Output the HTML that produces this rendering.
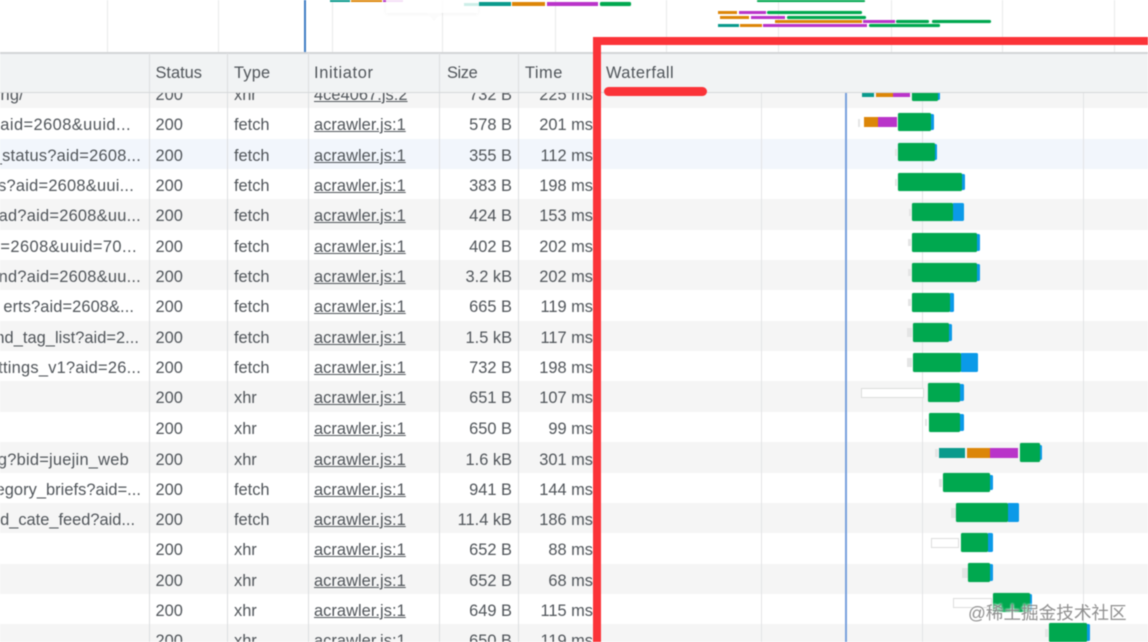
<!DOCTYPE html>
<html lang="en">
<head>
<meta charset="utf-8">
<title>Network Waterfall</title>
<style>
html,body{margin:0;padding:0;background:#fff}
#p{position:relative;width:1148px;height:642px;overflow:hidden;background:#fff;font-family:"Liberation Sans",Arial,sans-serif;font-size:16.4px;color:#50555a;filter:blur(.4px)}
#p div{position:absolute}
.b{left:0;width:1148px}
.g{background:#f5f5f5}
.r{left:0;width:593px;height:30px;line-height:30px;white-space:nowrap}
.n{left:0;top:0;height:30px;overflow:hidden;white-space:nowrap;letter-spacing:.25px}
.n div{right:0;top:0}
.s{left:155.5px}.y{left:234px}.i{left:314px;text-decoration:underline;letter-spacing:.05px}
.z{right:81px}.m{right:0}
.l{background:#dcdee0;width:1px}
.f{background:#e9eaeb;width:1px}
.G{background:#00a84f;border-radius:1.5px;box-shadow:0 0 1px rgba(0,168,79,.5)}.B{background:#0b9ae8;border-radius:0 1.5px 1.5px 0}.T{background:#0a9a8c}.O{background:#dc8608}.P{background:#b934c9}
.x{background:#e4e5e5}
.w{background:#fff;border:1px solid #dcdddc;box-sizing:border-box;height:10px}
.h{top:54px;line-height:39px}
</style>
</head>
<body>
<div id="p">
<!-- overview grid -->
<div class="f" style="left:107px;top:0;height:52px"></div>
<div class="f" style="left:218px;top:0;height:52px"></div>
<div class="f" style="left:332px;top:0;height:52px"></div>
<div class="f" style="left:442px;top:0;height:52px"></div>
<div class="f" style="left:555px;top:0;height:52px"></div>
<div class="f" style="left:666px;top:0;height:52px"></div>
<div class="f" style="left:778px;top:0;height:52px"></div>
<div class="f" style="left:891px;top:0;height:52px"></div>
<div class="f" style="left:1002px;top:0;height:52px"></div>
<div class="f" style="left:1114px;top:0;height:52px"></div>
<div style="left:304px;top:0;width:1.5px;height:52px;background:#3f7cc4"></div>
<!-- overview bars -->
<div class="T" style="left:330px;top:0;width:20px;height:2px"></div>
<div class="O" style="left:351px;top:0;width:31px;height:2px"></div>
<div class="P" style="left:383px;top:0;width:20px;height:2px"></div>
<div style="left:386px;top:0;width:92px;height:13px;background:rgba(255,255,255,.85);box-shadow:0 1px 4px rgba(0,0,0,.05)"></div>
<div style="left:427px;top:13px;width:0;height:0;border-left:7px solid transparent;border-right:7px solid transparent;border-top:8px solid #fbfbfb"></div>
<div style="left:464px;top:3px;width:15px;height:3px;background:#cdeee8"></div>
<div class="T" style="left:479px;top:2px;width:32px;height:3.5px"></div>
<div class="O" style="left:512px;top:2px;width:33px;height:3.5px"></div>
<div class="P" style="left:547px;top:2px;width:51px;height:3.5px"></div>
<div class="G" style="left:600px;top:2px;width:31px;height:3.5px"></div>
<div class="G" style="left:757px;top:0;width:108px;height:2px"></div>
<div class="O" style="left:718px;top:11px;width:19px;height:3px"></div>
<div class="P" style="left:739px;top:11px;width:27px;height:3px"></div>
<div class="G" style="left:767px;top:11px;width:95px;height:3px"></div>
<div class="O" style="left:720px;top:15.5px;width:29px;height:3px"></div>
<div class="P" style="left:751px;top:15.5px;width:34px;height:3px"></div>
<div class="G" style="left:787px;top:15.5px;width:79px;height:3px"></div>
<div class="O" style="left:775px;top:20px;width:87px;height:3px"></div>
<div class="P" style="left:863px;top:20px;width:32px;height:3px"></div>
<div class="G" style="left:896px;top:20px;width:33px;height:3px"></div>
<div class="G" style="left:932px;top:20px;width:59px;height:3px"></div>
<div class="T" style="left:718px;top:24px;width:21px;height:3px"></div>
<div class="O" style="left:740px;top:24px;width:22px;height:3px"></div>
<div class="P" style="left:763px;top:24px;width:104px;height:3px"></div>
<div class="G" style="left:869px;top:24px;width:71px;height:3px"></div>

<!-- row bands -->
<div class="b g" style="top:92px;height:16px"></div>
<div class="b" style="top:139px;height:30px;background:#f2f6fc"></div>
<div class="b g" style="top:199px;height:31px"></div>
<div class="b g" style="top:260px;height:30px"></div>
<div class="b g" style="top:321px;height:30px"></div>
<div class="b g" style="top:381px;height:31px"></div>
<div class="b g" style="top:442px;height:31px"></div>
<div class="b g" style="top:503px;height:30px"></div>
<div class="b g" style="top:564px;height:30px"></div>
<div class="b g" style="top:624px;height:18px"></div>

<!-- waterfall grid -->
<div class="f" style="left:760.5px;top:92px;height:550px;background:#e3e4e5"></div>
<div class="f" style="left:921.5px;top:92px;height:550px;background:#e3e4e5"></div>
<div class="f" style="left:1083px;top:92px;height:550px;background:#e3e4e5"></div>
<div style="left:844.5px;top:92px;width:2px;height:550px;background:#78a0dc"></div>

<!-- waterfall bars -->
<div class="T" style="left:862px;top:92px;width:12px;height:5px"></div><div class="O" style="left:876px;top:92px;width:17px;height:5px"></div><div class="P" style="left:893px;top:92px;width:17px;height:5px"></div><div class="G" style="left:912px;top:92px;width:26px;height:9px"></div><div class="B" style="left:938px;top:92px;width:2px;height:8px"></div>
<div class="x" style="left:858px;top:119px;width:2px;height:8px"></div><div class="O" style="left:864px;top:117px;width:14px;height:10px"></div><div class="P" style="left:878px;top:117px;width:19px;height:10px"></div><div class="G" style="left:898px;top:113px;width:33px;height:18px"></div><div class="B" style="left:931px;top:114px;width:3px;height:16px"></div>
<div class="x" style="left:895px;top:149px;width:2px;height:7px"></div><div class="G" style="left:898px;top:143px;width:37px;height:18px"></div><div class="B" style="left:935px;top:144px;width:2px;height:16px"></div>
<div class="x" style="left:895px;top:179px;width:2px;height:7px"></div><div class="G" style="left:898px;top:173px;width:64px;height:18px"></div><div class="B" style="left:962px;top:174px;width:3px;height:16px"></div>
<div class="x" style="left:909px;top:209px;width:2px;height:7px"></div><div class="G" style="left:912px;top:203px;width:41px;height:18px"></div><div class="B" style="left:953px;top:203px;width:11px;height:18px"></div>
<div class="x" style="left:908px;top:239px;width:3px;height:7px"></div><div class="G" style="left:912px;top:233px;width:65px;height:19px"></div><div class="B" style="left:977px;top:234px;width:3px;height:17px"></div>
<div class="x" style="left:908px;top:269px;width:3px;height:7px"></div><div class="G" style="left:912px;top:263px;width:65px;height:19px"></div><div class="B" style="left:977px;top:264px;width:3px;height:17px"></div>
<div class="x" style="left:908px;top:299px;width:3px;height:7px"></div><div class="G" style="left:912px;top:293px;width:38px;height:19px"></div><div class="B" style="left:950px;top:293px;width:4px;height:19px"></div>
<div class="x" style="left:907px;top:328px;width:5px;height:9px"></div><div class="G" style="left:913px;top:323px;width:36px;height:19px"></div><div class="B" style="left:949px;top:324px;width:3px;height:17px"></div>
<div class="x" style="left:907px;top:358px;width:5px;height:9px"></div><div class="G" style="left:913px;top:353px;width:48px;height:19px"></div><div class="B" style="left:961px;top:353px;width:17px;height:19px"></div>
<div class="w" style="left:861px;top:388px;width:63px"></div><div class="G" style="left:928px;top:383px;width:32px;height:19px"></div><div class="B" style="left:960px;top:384px;width:4px;height:17px"></div>
<div class="x" style="left:925px;top:419px;width:2px;height:7px"></div><div class="G" style="left:929px;top:413px;width:31px;height:19px"></div><div class="B" style="left:960px;top:414px;width:4px;height:17px"></div>
<div class="x" style="left:935px;top:449px;width:3px;height:8px"></div><div class="T" style="left:939px;top:448px;width:26px;height:10px"></div><div class="O" style="left:967px;top:448px;width:23px;height:10px"></div><div class="P" style="left:990px;top:448px;width:28px;height:10px"></div><div class="G" style="left:1020px;top:443px;width:20px;height:19px"></div><div class="B" style="left:1040px;top:445px;width:2px;height:15px"></div>
<div class="x" style="left:939px;top:479px;width:3px;height:8px"></div><div class="G" style="left:943px;top:473px;width:47px;height:19px"></div><div class="B" style="left:990px;top:475px;width:3px;height:15px"></div>
<div class="x" style="left:951px;top:508px;width:5px;height:10px"></div><div class="G" style="left:956px;top:503px;width:52px;height:19px"></div><div class="B" style="left:1008px;top:503px;width:11px;height:19px"></div>
<div class="w" style="left:931px;top:538px;width:28px"></div><div class="G" style="left:961px;top:533px;width:27px;height:19px"></div><div class="B" style="left:988px;top:533px;width:5px;height:19px"></div>
<div class="x" style="left:962px;top:568px;width:6px;height:10px"></div><div class="G" style="left:968px;top:563px;width:22px;height:19px"></div><div class="B" style="left:990px;top:564px;width:3px;height:17px"></div>
<div class="w" style="left:953px;top:598px;width:39px"></div><div class="G" style="left:993px;top:593px;width:37px;height:19px"></div><div class="B" style="left:1030px;top:594px;width:2px;height:17px"></div>
<div class="x" style="left:1045px;top:629px;width:3px;height:8px"></div><div class="G" style="left:1049px;top:623px;width:38px;height:19px"></div><div class="B" style="left:1087px;top:624px;width:3px;height:17px"></div>

<!-- table rows -->
<div class="r" style="top:80px"><div class="n" style="width:24px"><div>ing/</div></div><div class="s">200</div><div class="y">xhr</div><div class="i">4ce4067.js:2</div><div class="z">732 B</div><div class="m">225 ms</div></div>
<div class="r" style="top:110px"><div class="n" style="width:131px;letter-spacing:.45px"><div>aid=2608&amp;uuid...</div></div><div class="s">200</div><div class="y">fetch</div><div class="i">acrawler.js:1</div><div class="z">578 B</div><div class="m">201 ms</div></div>
<div class="r" style="top:141px"><div class="n" style="width:141px"><div>_status?aid=2608...</div></div><div class="s">200</div><div class="y">fetch</div><div class="i">acrawler.js:1</div><div class="z">355 B</div><div class="m">112 ms</div></div>
<div class="r" style="top:171px"><div class="n" style="width:134px"><div>s?aid=2608&amp;uui...</div></div><div class="s">200</div><div class="y">fetch</div><div class="i">acrawler.js:1</div><div class="z">383 B</div><div class="m">198 ms</div></div>
<div class="r" style="top:200.6px"><div class="n" style="width:141px"><div>ad?aid=2608&amp;uu...</div></div><div class="s">200</div><div class="y">fetch</div><div class="i">acrawler.js:1</div><div class="z">424 B</div><div class="m">153 ms</div></div>
<div class="r" style="top:232px"><div class="n" style="width:137px;letter-spacing:.45px"><div>=2608&amp;uuid=70...</div></div><div class="s">200</div><div class="y">fetch</div><div class="i">acrawler.js:1</div><div class="z">402 B</div><div class="m">202 ms</div></div>
<div class="r" style="top:262px"><div class="n" style="width:141px"><div>nd?aid=2608&amp;uu...</div></div><div class="s">200</div><div class="y">fetch</div><div class="i">acrawler.js:1</div><div class="z">3.2 kB</div><div class="m">202 ms</div></div>
<div class="r" style="top:292px"><div class="n" style="width:134px;letter-spacing:.1px"><div>erts?aid=2608&amp;...</div></div><div class="s">200</div><div class="y">fetch</div><div class="i">acrawler.js:1</div><div class="z">665 B</div><div class="m">119 ms</div></div>
<div class="r" style="top:323px"><div class="n" style="width:139px;letter-spacing:.05px"><div>nd_tag_list?aid=2...</div></div><div class="s">200</div><div class="y">fetch</div><div class="i">acrawler.js:1</div><div class="z">1.5 kB</div><div class="m">117 ms</div></div>
<div class="r" style="top:353px"><div class="n" style="width:141px"><div>ttings_v1?aid=26...</div></div><div class="s">200</div><div class="y">fetch</div><div class="i">acrawler.js:1</div><div class="z">732 B</div><div class="m">198 ms</div></div>
<div class="r" style="top:383px"><div class="s">200</div><div class="y">xhr</div><div class="i">acrawler.js:1</div><div class="z">651 B</div><div class="m">107 ms</div></div>
<div class="r" style="top:413.6px"><div class="s">200</div><div class="y">xhr</div><div class="i">acrawler.js:1</div><div class="z">650 B</div><div class="m">99 ms</div></div>
<div class="r" style="top:445px"><div class="n" style="width:129px"><div>g?bid=juejin_web</div></div><div class="s">200</div><div class="y">xhr</div><div class="i">acrawler.js:1</div><div class="z">1.6 kB</div><div class="m">301 ms</div></div>
<div class="r" style="top:475px"><div class="n" style="width:141px;letter-spacing:.05px"><div>egory_briefs?aid=...</div></div><div class="s">200</div><div class="y">fetch</div><div class="i">acrawler.js:1</div><div class="z">941 B</div><div class="m">144 ms</div></div>
<div class="r" style="top:505px"><div class="n" style="width:135px;letter-spacing:0"><div>nd_cate_feed?aid...</div></div><div class="s">200</div><div class="y">fetch</div><div class="i">acrawler.js:1</div><div class="z">11.4 kB</div><div class="m">186 ms</div></div>
<div class="r" style="top:535px"><div class="s">200</div><div class="y">xhr</div><div class="i">acrawler.js:1</div><div class="z">652 B</div><div class="m">88 ms</div></div>
<div class="r" style="top:566px"><div class="s">200</div><div class="y">xhr</div><div class="i">acrawler.js:1</div><div class="z">652 B</div><div class="m">68 ms</div></div>
<div class="r" style="top:596px"><div class="s">200</div><div class="y">xhr</div><div class="i">acrawler.js:1</div><div class="z">649 B</div><div class="m">115 ms</div></div>
<div class="r" style="top:626px"><div class="s">200</div><div class="y">xhr</div><div class="i">acrawler.js:1</div><div class="z">650 B</div><div class="m">119 ms</div></div>

<!-- table column lines -->
<div class="l" style="left:148.5px;top:92px;height:550px"></div>
<div class="l" style="left:227px;top:92px;height:550px"></div>
<div class="l" style="left:308px;top:92px;height:550px"></div>
<div class="l" style="left:439px;top:92px;height:550px"></div>
<div class="l" style="left:518px;top:92px;height:550px"></div>

<!-- header -->
<div style="left:0;top:53px;width:1148px;height:39px;background:#f1f3f4"></div>
<div style="left:0;top:51.5px;width:1148px;height:2px;background:#d3d5d7"></div>
<div style="left:0;top:91.5px;width:1148px;height:1.5px;background:#d6d8da"></div>
<div class="l" style="left:148.5px;top:53px;height:39px"></div>
<div class="l" style="left:227px;top:53px;height:39px"></div>
<div class="l" style="left:308px;top:53px;height:39px"></div>
<div class="l" style="left:439px;top:53px;height:39px"></div>
<div class="l" style="left:518px;top:53px;height:39px"></div>
<div class="h" style="left:155.5px">Status</div>
<div class="h" style="left:234px;letter-spacing:.2px">Type</div>
<div class="h" style="left:314px;letter-spacing:.65px">Initiator</div>
<div class="h" style="left:447px;letter-spacing:-.4px">Size</div>
<div class="h" style="left:525px;letter-spacing:.5px">Time</div>
<div class="h" style="left:606px;letter-spacing:.45px">Waterfall</div>

<!-- red annotations -->
<div style="left:593px;top:37px;width:555px;height:8px;background:#fb3338"></div>
<div style="left:593px;top:37px;width:8px;height:605px;background:#fb3338"></div>
<div style="left:604px;top:87px;width:103px;height:8.5px;background:#fb3338;border-radius:5px"></div>

<!-- watermark -->
<div style="left:968px;top:601px;height:24px;line-height:24px;white-space:nowrap;font-family:'Liberation Sans','Noto Sans CJK SC',sans-serif;font-size:17.6px;color:rgba(115,115,115,.8);text-shadow:0 0 2px #fff,0 0 2px #fff">@稀土掘金技术社区</div>
</div>
</body>
</html>
